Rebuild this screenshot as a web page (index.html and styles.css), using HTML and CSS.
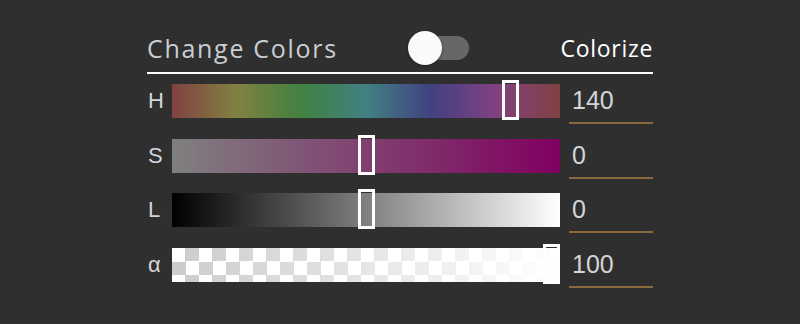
FILE: index.html
```html
<!DOCTYPE html>
<html lang="en">
<head>
    <meta charset="UTF-8">
    <title>Change Colors</title>
    <link rel="stylesheet" href="styles.css">
</head>
<body>
    <div class="panel">
        <div class="panel-head">
            <span class="title">Change Colors</span>
            <span class="toggle"><span class="knob"></span></span>
            <span class="colorize">Colorize</span>
        </div>
        <div class="rows">
            <div class="row">
                <span class="label">H</span>
                <div class="bar bar-hue">
                    <span class="handle" style="left: 330px"></span>
                </div>
                <input class="value" type="text" value="140">
            </div>
            <div class="row">
                <span class="label">S</span>
                <div class="bar bar-sat">
                    <span class="handle" style="left: 186px"></span>
                </div>
                <input class="value" type="text" value="0">
            </div>
            <div class="row">
                <span class="label">L</span>
                <div class="bar bar-light">
                    <span class="handle" style="left: 186px"></span>
                </div>
                <input class="value" type="text" value="0">
            </div>
            <div class="row">
                <span class="label">α</span>
                <div class="bar bar-alpha">
                    <span class="handle" style="left: 371px"></span>
                </div>
                <input class="value" type="text" value="100">
            </div>
        </div>
    </div>
</body>
</html>
```

FILE: styles.css
```css
body {
    margin: 0;
    background: #2f2f2f;
    font-family: "Liberation Sans", Arial, sans-serif;
}
.panel {
    width: 506px;
    margin-left: 147px;
    padding-top: 24px;
}
.panel-head {
    display: flex;
    align-items: center;
    height: 48px;
    border-bottom: 2px solid #fff;
}
.title {
    font-family: "Open Sans", sans-serif;
    font-size: 25px;
    letter-spacing: 1.7px;
    color: #c9ced3;
}
.toggle {
    position: relative;
    width: 60px;
    height: 24px;
    margin-left: 71px;
    border-radius: 12px;
    background: #676767;
}
.knob {
    position: absolute;
    left: -1px;
    top: -5px;
    width: 34px;
    height: 34px;
    border-radius: 50%;
    background: #fafafa;
    box-shadow: 0 1px 3px rgba(0, 0, 0, 0.4);
}
.colorize {
    margin-left: auto;
    font-family: "Open Sans", sans-serif;
    font-size: 23px;
    letter-spacing: 0.7px;
    color: #fff;
}
.rows {
    display: flex;
    flex-direction: column;
    gap: 14.67px;
    padding-top: 10px;
}
.row {
    display: grid;
    grid-template-columns: 16px 388px 84px;
    column-gap: 9px;
    align-items: start;
    height: 40px;
}
.label {
    line-height: 34px;
    font-size: 22px;
    color: #d2d6da;
    padding-left: 1px;
}
.bar {
    position: relative;
    height: 34px;
}
.bar-hue {
    background: linear-gradient(to right,
        hsl(0, 33%, 38%), hsl(60, 33%, 38%), hsl(120, 33%, 38%),
        hsl(180, 33%, 38%), hsl(240, 33%, 38%), hsl(300, 33%, 38%),
        hsl(360, 33%, 38%));
}
.bar-sat {
    background: linear-gradient(to right, #808080, #800060);
}
.bar-light {
    background: linear-gradient(to right, #000, #fff);
}
.bar-alpha {
    background:
        linear-gradient(to right, rgba(255, 255, 255, 0), #fff),
        conic-gradient(#ccc 25%, #fff 0 50%, #ccc 0 75%, #fff 0) 0 0 / 27px 27px;
}
.handle {
    position: absolute;
    top: -4px;
    width: 17px;
    height: 40px;
    box-sizing: border-box;
    border: 3px solid #fff;
}
.value {
    width: 84px;
    min-width: 0;
    height: 40px;
    box-sizing: border-box;
    padding: 0 3px 5px;
    border: none;
    border-bottom: 2px solid #8c6a3e;
    background: transparent;
    font-family: "Liberation Sans", Arial, sans-serif;
    font-size: 25px;
    color: #d2d6da;
    outline: none;
}
```
